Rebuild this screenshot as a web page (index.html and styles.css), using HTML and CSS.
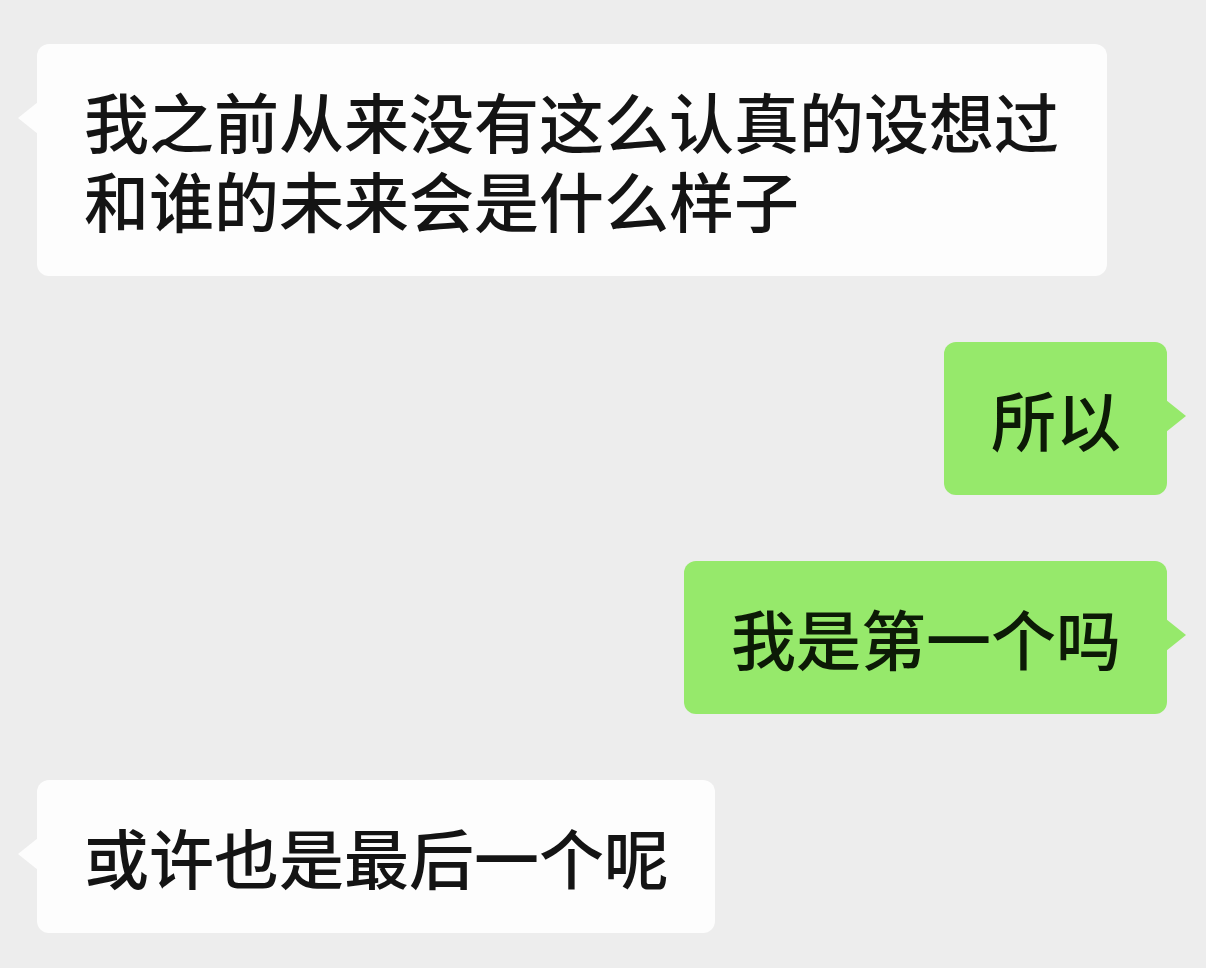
FILE: index.html
```html
<!DOCTYPE html>
<html lang="zh-CN">
<head>
<meta charset="utf-8">
<title>聊天记录</title>
<link rel="stylesheet" href="styles.css">
</head>
<body>
<main class="chat">
  <div class="msg msg-in">我之前从来没有这么认真的设想过和谁的未来会是什么样子</div>
  <div class="msg msg-out">所以</div>
  <div class="msg msg-out">我是第一个吗</div>
  <div class="msg msg-in">或许也是最后一个呢</div>
</main>
</body>
</html>
```

FILE: styles.css
```css
html, body {
  margin: 0;
  padding: 0;
  background: #ededed;
}

body {
  width: 1206px;
  height: 968px;
  overflow: hidden;
}

.chat {
  display: flex;
  flex-direction: column;
  gap: 66px;
  padding: 44px 39px 0 37px;
}

.msg {
  position: relative;
  box-sizing: border-box;
  max-width: 1070px;
  padding: 37px 46px 37px 47px;
  border-radius: 12px;
  font-family: "Noto Sans CJK SC", "Noto Sans", sans-serif;
  font-size: 65px;
  font-weight: 500;
  line-height: 79px;
  color: #141414;
}

/* bubble tail */
.msg::before {
  content: "";
  position: absolute;
  top: 58px;
  width: 0;
  height: 0;
  border-top: 16px solid transparent;
  border-bottom: 16px solid transparent;
}

.msg-in {
  align-self: flex-start;
  background: #fdfdfd;
}

.msg-in::before {
  left: -19px;
  border-right: 20px solid #fdfdfd;
}

.msg-out {
  align-self: flex-end;
  background: #96e96b;
  color: #0c1a06;
}

.msg-out::before {
  right: -19px;
  border-left: 20px solid #96e96b;
}
```
